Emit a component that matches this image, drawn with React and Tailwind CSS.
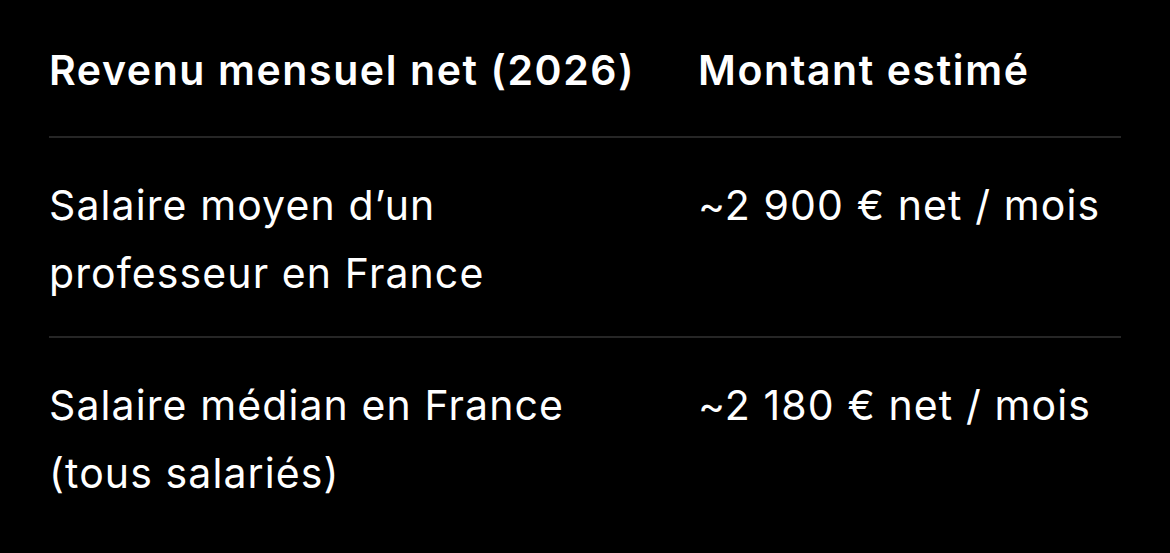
export default function App() {
  const rows = [
    { a: ["Salaire moyen d\u2019un", "professeur en France"], b: "~2 900 € net / mois" },
    { a: ["Salaire médian en France", "(tous salariés)"], b: "~2 180 € net / mois" },
  ];
  return (
    <div
      className="w-[1170px] h-[553px] bg-black text-white overflow-hidden"
      style={{ fontFamily: "Inter, 'Noto Sans', sans-serif" }}
    >
      <div className="ml-[49px] w-[1072px] pt-[37px]">
        <div className="grid grid-cols-[649px_1fr] border-b-2 border-[#262626] pb-[32px] text-[41px] leading-[67px] font-semibold tracking-[1.6px]">
          <div className="whitespace-nowrap">Revenu mensuel net (2026)</div>
          <div className="whitespace-nowrap">Montant estimé</div>
        </div>
        {rows.map((r, i) => (
          <div
            key={i}
            className={
              "grid grid-cols-[649px_1fr] pt-[33px] pb-[29px] text-[41px] leading-[68px] font-normal tracking-[1.1px] " +
              (i === 0 ? "border-b-2 border-[#262626]" : "")
            }
          >
            <div>
              {r.a.map((l, j) => (
                <div key={j} className="whitespace-nowrap">{l}</div>
              ))}
            </div>
            <div className="whitespace-nowrap">{r.b}</div>
          </div>
        ))}
      </div>
    </div>
  );
}
